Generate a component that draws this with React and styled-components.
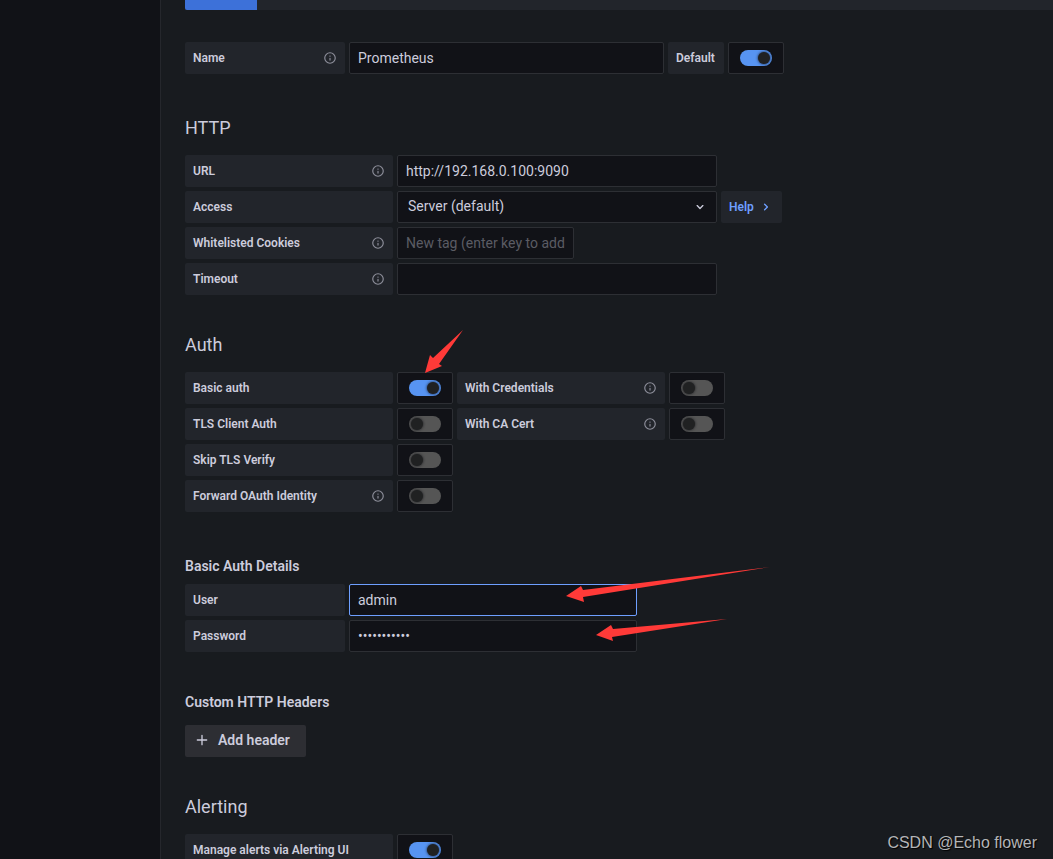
import React from "react";
import styled, { createGlobalStyle } from "styled-components";

const GlobalStyle = createGlobalStyle`
  * {
    box-sizing: border-box;
  }

  body {
    margin: 0;
    background-color: #111217;
    color: #ccccdc;
    font-family: Roboto, "Liberation Sans", sans-serif;
    font-size: 14px;
    line-height: 20px;
  }

  button,
  input,
  select {
    font: inherit;
    color: inherit;
  }
`;

const Page = styled.div`
  position: relative;
  display: flex;
  height: 100vh;
  overflow: hidden;
`;

const Sidebar = styled.aside`
  flex: 0 0 160px;
  background-color: #111217;
`;

const Content = styled.main`
  flex: 1;
  min-width: 0;
  padding-left: 24px;
  background-color: #181b1f;
  border-left: 1px solid #25272c;
`;

const TabBar = styled.nav`
  display: flex;
  height: 10px;
  margin-bottom: 32px;
  background-color: #22252b;
`;

const ActiveTab = styled.a`
  width: 72px;
  background-color: #3d71d9;
  border-bottom-left-radius: 2px;
`;

const Section = styled.section`
  display: flex;
  flex-direction: column;
  align-items: flex-start;
  gap: 4px;
  margin-bottom: ${(props) => props.$space || 38}px;
`;

const Title = styled.h3`
  margin: 0 0 11px;
  font-size: 18px;
  font-weight: 400;
  line-height: 24px;
`;

const SubTitle = styled.h6`
  margin: 0 0 ${(props) => props.$space || 4}px;
  font-size: 14px;
  font-weight: 600;
  line-height: 20px;
`;

const Row = styled.div`
  display: flex;
  gap: 4px;
`;

const Label = styled.label`
  display: flex;
  align-items: center;
  justify-content: space-between;
  flex-shrink: 0;
  width: ${(props) => props.$width || 208}px;
  height: 32px;
  padding: 0 8px;
  background-color: #22252b;
  border-radius: 2px;
  font-size: 12px;
  font-weight: 600;
  white-space: nowrap;
`;

const Input = styled.input`
  width: ${(props) => props.$width || 320}px;
  height: 32px;
  padding: 0 8px;
  background-color: #111217;
  border: 1px solid ${(props) => (props.$active ? "#6e9fff" : "#2d2f34")};
  border-radius: 2px;
  outline: none;

  &::placeholder {
    color: #5b5c64;
    opacity: 1;
  }
`;

const SelectBox = styled.div`
  position: relative;
  width: 320px;

  > select {
    width: 100%;
    height: 32px;
    padding: 0 32px 2px 10px;
    appearance: none;
    background-color: #111217;
    border: 1px solid #2d2f34;
    border-radius: 2px;
    outline: none;
  }

  > svg {
    position: absolute;
    top: 8px;
    right: 9px;
    pointer-events: none;
  }
`;

const HelpButton = styled.button`
  display: flex;
  align-items: center;
  gap: 4px;
  height: 32px;
  padding: 0 8px;
  background-color: #22252b;
  border: none;
  border-radius: 2px;
  color: #6e9fff;
  font-size: 12px;
  font-weight: 600;
  cursor: pointer;
`;

const AddButton = styled.button`
  display: flex;
  align-items: center;
  gap: 8px;
  height: 32px;
  padding: 0 16px 2px 9px;
  background-color: #2d2e33;
  border: none;
  border-radius: 2px;
  font-weight: 600;
  cursor: pointer;
`;

const SwitchBox = styled.div`
  display: flex;
  align-items: center;
  justify-content: center;
  width: 56px;
  height: 32px;
  background-color: #111217;
  border: 1px solid #2d2f34;
  border-radius: 2px;
`;

const Toggle = styled.input`
  display: flex;
  align-items: center;
  width: 32px;
  height: 16px;
  margin: 0;
  padding: 0 2px;
  appearance: none;
  background-color: #555555;
  border-radius: 8px;
  cursor: pointer;

  &::before {
    content: "";
    width: 12px;
    height: 12px;
    background-color: #202122;
    border-radius: 50%;
    box-shadow: 0 0 3px #111217;
  }

  &:checked {
    justify-content: flex-end;
    background-color: #5794f2;
  }
`;

const Arrows = styled.svg`
  position: absolute;
  top: 0;
  left: 0;
  fill: #ff3a38;
  pointer-events: none;
`;

const Watermark = styled.span`
  position: absolute;
  right: 16px;
  bottom: 6px;
  color: #b4b5b7;
  font-family: "Liberation Sans", Arial, sans-serif;
  font-size: 16px;
  text-shadow: 1px 1px 1px #000000;
`;

const icons = {
  info:
    "M12,2A10,10,0,1,0,22,12,10,10,0,0,0,12,2Zm0,18a8,8,0,1,1,8-8A8,8,0,0,1,12,20Zm0-8.5a1,1,0,0,0-1,1v3a1,1,0,0,0,2,0v-3A1,1,0,0,0,12,11.5Zm0-4a1.25,1.25,0,1,0,1.25,1.25A1.25,1.25,0,0,0,12,7.5Z",
  down:
    "M17,9.17a1,1,0,0,0-1.41,0L12,12.71,8.46,9.17a1,1,0,0,0-1.41,0,1,1,0,0,0,0,1.42l4.24,4.24a1,1,0,0,0,1.42,0L17,10.59A1,1,0,0,0,17,9.17Z",
  right:
    "M14.83,11.29,10.59,7.05a1,1,0,0,0-1.42,0,1,1,0,0,0,0,1.41L12.71,12,9.17,15.54a1,1,0,0,0,0,1.41,1,1,0,0,0,.71.29,1,1,0,0,0,.71-.29l4.24-4.24A1,1,0,0,0,14.83,11.29Z",
  plus:
    "M19,11H13V5a1,1,0,0,0-2,0v6H5a1,1,0,0,0,0,2h6v6a1,1,0,0,0,2,0V13h6a1,1,0,0,0,0-2Z",
};

const Icon = ({ name, size = 16, color = "currentColor" }) => (
  <svg width={size} height={size} viewBox="0 0 24 24" fill={color} aria-hidden="true">
    <path d={icons[name]} />
  </svg>
);

const FieldLabel = ({ id, text, info, width }) => (
  <Label htmlFor={id} $width={width}>
    {text}
    {info && <Icon name="info" size={14} color="#8e8f9b" />}
  </Label>
);

const SwitchField = ({ id, text, info, width, on }) => (
  <>
    <FieldLabel id={id} text={text} info={info} width={width} />
    <SwitchBox>
      <Toggle id={id} type="checkbox" defaultChecked={on} />
    </SwitchBox>
  </>
);

export default function App() {
  return (
    <Page>
      <GlobalStyle />
      <Sidebar />
      <Content>
        <TabBar>
          <ActiveTab href="#settings" aria-label="Settings" />
        </TabBar>

        <Section $space={42}>
          <Row>
            <FieldLabel id="name" text="Name" width={160} info />
            <Input id="name" $width={315} defaultValue="Prometheus" />
            <SwitchField id="default" text="Default" width={56} on />
          </Row>
        </Section>

        <Section>
          <Title>HTTP</Title>
          <Row>
            <FieldLabel id="url" text="URL" info />
            <Input id="url" defaultValue="http://192.168.0.100:9090" />
          </Row>
          <Row>
            <FieldLabel id="access" text="Access" />
            <SelectBox>
              <select id="access" defaultValue="server">
                <option value="server">Server (default)</option>
                <option value="browser">Browser</option>
              </select>
              <Icon name="down" />
            </SelectBox>
            <HelpButton type="button">
              Help
              <Icon name="right" />
            </HelpButton>
          </Row>
          <Row>
            <FieldLabel id="cookies" text="Whitelisted Cookies" info />
            <Input id="cookies" $width={177} placeholder="New tag (enter key to add" />
          </Row>
          <Row>
            <FieldLabel id="timeout" text="Timeout" info />
            <Input id="timeout" />
          </Row>
        </Section>

        <Section $space={44}>
          <Title>Auth</Title>
          <Row>
            <SwitchField id="basic" text="Basic auth" on />
            <SwitchField id="credentials" text="With Credentials" info />
          </Row>
          <Row>
            <SwitchField id="tls" text="TLS Client Auth" />
            <SwitchField id="ca" text="With CA Cert" info />
          </Row>
          <Row>
            <SwitchField id="skip" text="Skip TLS Verify" />
          </Row>
          <Row>
            <SwitchField id="oauth" text="Forward OAuth Identity" info />
          </Row>
        </Section>

        <Section $space={40}>
          <SubTitle>Basic Auth Details</SubTitle>
          <Row>
            <FieldLabel id="user" text="User" width={160} />
            <Input id="user" $width={288} $active defaultValue="admin" />
          </Row>
          <Row>
            <FieldLabel id="password" text="Password" width={160} />
            <Input id="password" type="password" $width={288} defaultValue="admin123456" />
          </Row>
        </Section>

        <Section>
          <SubTitle $space={9}>Custom HTTP Headers</SubTitle>
          <AddButton type="button">
            <Icon name="plus" />
            Add header
          </AddButton>
        </Section>

        <Section>
          <Title>Alerting</Title>
          <Row>
            <SwitchField id="alerts" text="Manage alerts via Alerting UI" on />
          </Row>
        </Section>
      </Content>

      <Arrows width="800" height="700" viewBox="0 0 800 700" aria-hidden="true">
        <path d="M463 330L439 364L442 366L425 373L430 355L433 358Z" />
        <path d="M770 567L583 597L584 602L566 596L581 586L583 590Z" />
        <path d="M727 619L612 637L613 641L596 635L611 625L613 629Z" />
      </Arrows>
      <Watermark>CSDN @Echo flower</Watermark>
    </Page>
  );
}
